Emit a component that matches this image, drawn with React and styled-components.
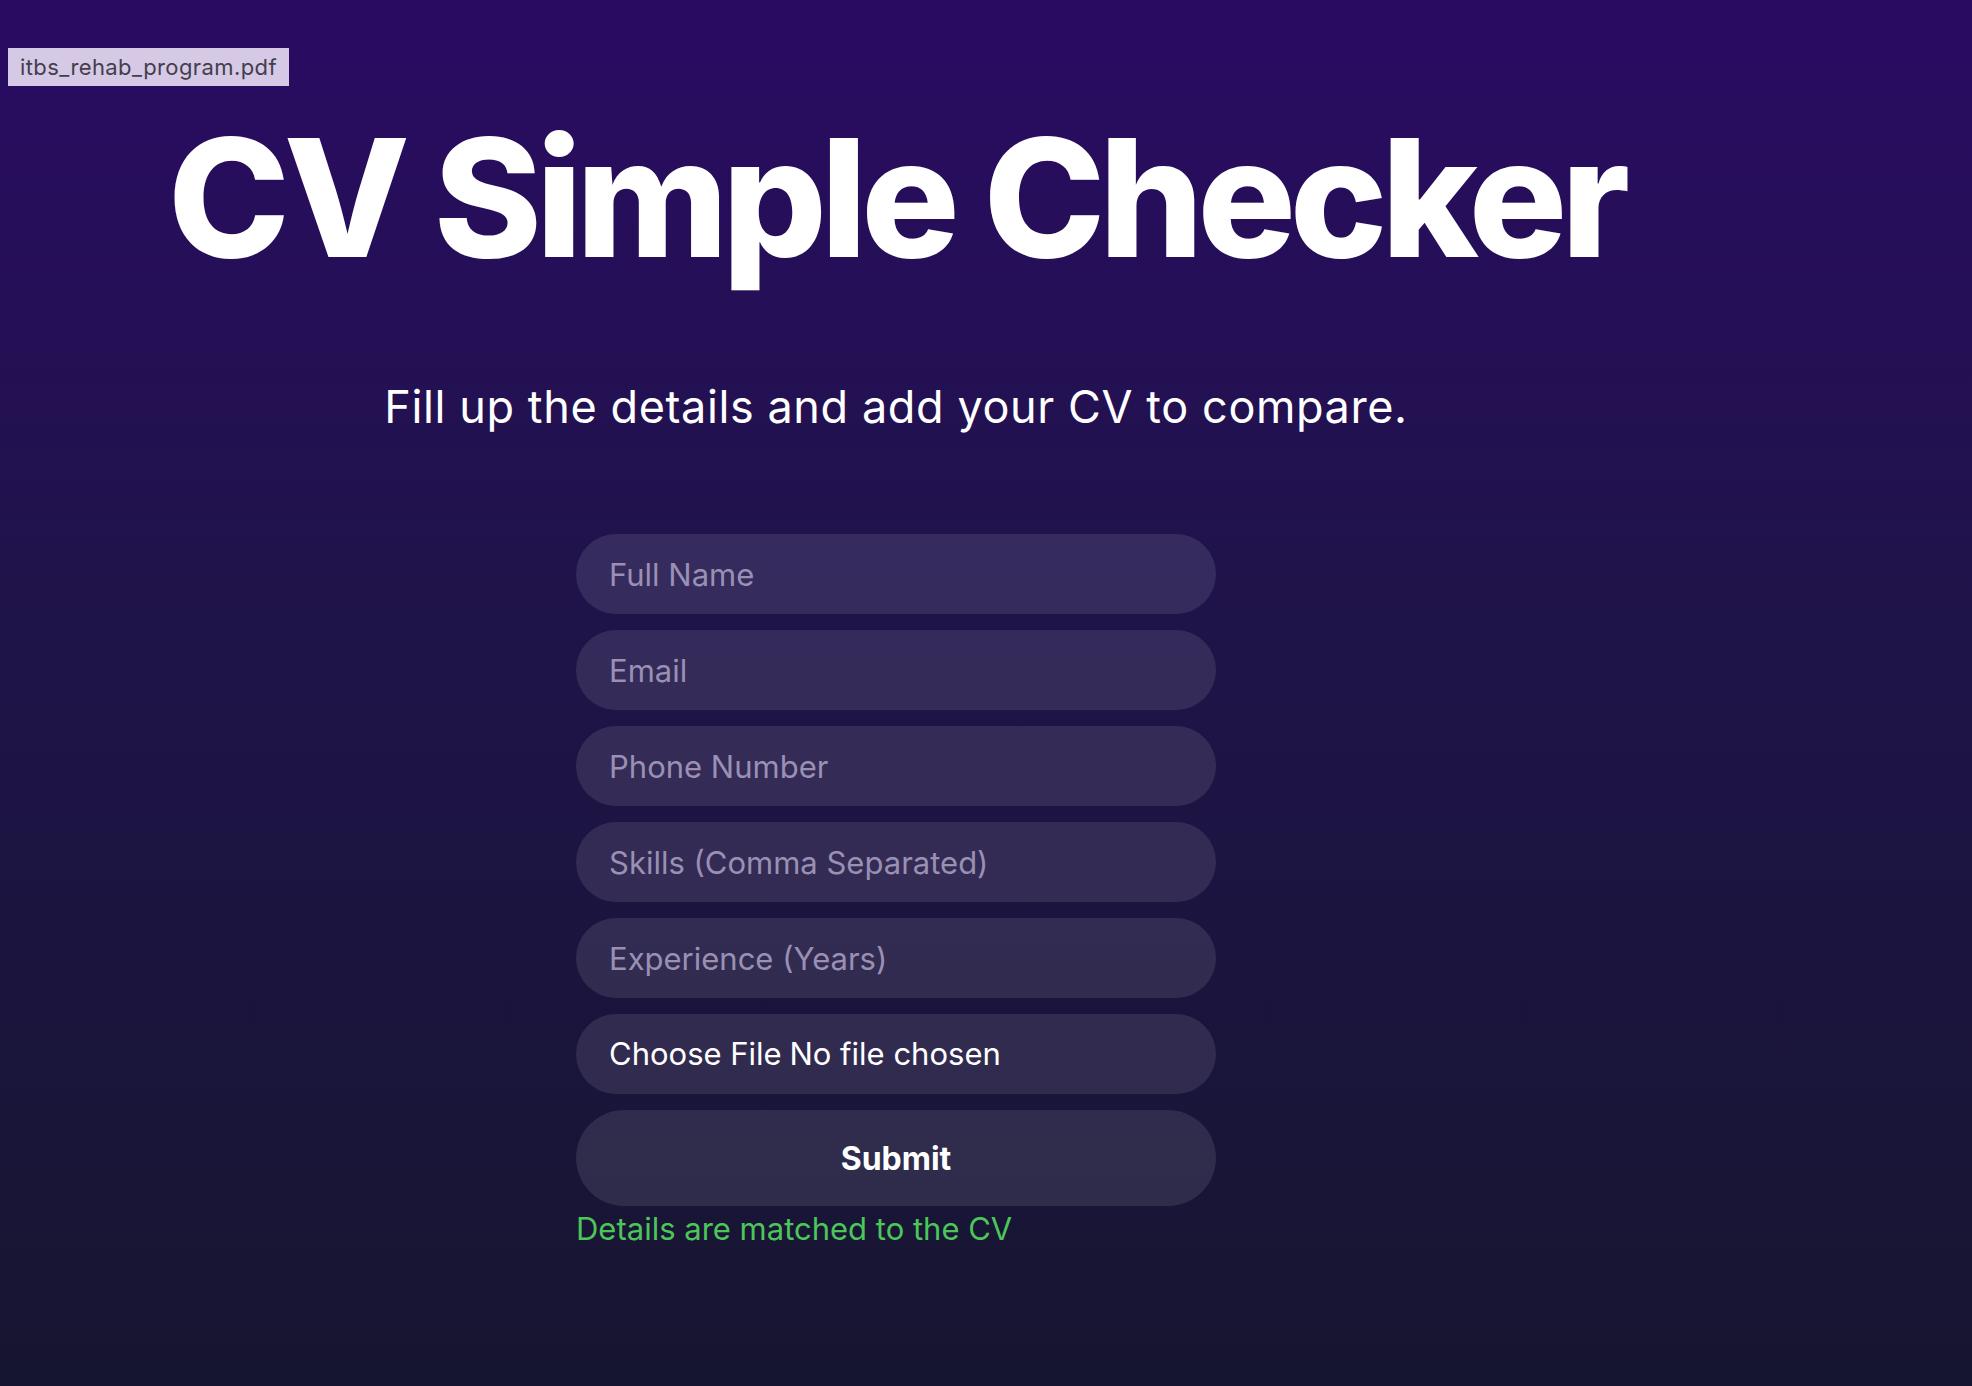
import React from 'react'
import styled, { createGlobalStyle } from 'styled-components'

const GlobalStyle = createGlobalStyle`
  * { box-sizing: border-box; }
  html, body { margin: 0; padding: 0; }
  body {
    font-family: Inter, "Noto Sans", "Liberation Sans", sans-serif;
    background: #171530;
  }
`

const Page = styled.div`
  min-height: 1386px;
  display: flex;
  flex-direction: column;
  background: linear-gradient(180deg, #2a0b63 0%, #1f1449 45%, #161530 100%);
  padding-top: 48px;
`

const FileTag = styled.div`
  align-self: flex-start;
  margin-left: 8px;
  height: 38px;
  padding: 0 12px;
  display: flex;
  align-items: center;
  background: #d5c9e6;
  color: #433e4d;
  font-size: 22px;
  letter-spacing: 0.4px;
`

const Main = styled.main`
  width: 1792px;
  display: flex;
  flex-direction: column;
  align-items: center;
`

const Title = styled.h1`
  margin: 30px 0 0;
  font-size: 164px;
  line-height: 1;
  font-weight: 800;
  letter-spacing: -0.037em;
  color: #ffffff;
  white-space: nowrap;
`

const Subtitle = styled.p`
  margin: 100px 0 0;
  font-size: 45px;
  line-height: 1.2;
  letter-spacing: 0.6px;
  color: #ffffff;
  white-space: nowrap;
`

const Form = styled.form`
  margin-top: 100px;
  width: 640px;
  display: flex;
  flex-direction: column;
  gap: 16px;
`

const Field = styled.input`
  height: 80px;
  width: 100%;
  padding: 0 33px;
  border: none;
  border-radius: 40px;
  outline: none;
  background: rgba(255, 255, 255, 0.1);
  color: #ffffff;
  font-family: inherit;
  font-size: 31px;

  &::placeholder {
    color: #9a90b4;
  }

  &[type='file'] {
    line-height: 80px;
  }

  &::file-selector-button {
    background: none;
    border: none;
    padding: 0;
    margin-right: 0.25em;
    color: #ffffff;
    font-family: inherit;
    font-size: 31px;
  }
`

const SubmitButton = styled.button`
  height: 96px;
  width: 100%;
  border: none;
  border-radius: 48px;
  background: rgba(255, 255, 255, 0.1);
  color: #ffffff;
  font-family: inherit;
  font-size: 32px;
  font-weight: 700;
  cursor: pointer;
`

const Status = styled.p`
  margin: -12px 0 0;
  font-size: 31px;
  line-height: 1.2;
  color: ${props => (props.ok ? '#4cc659' : '#e45a5a')};
`

const fields = [
  { type: 'text', placeholder: 'Full Name' },
  { type: 'email', placeholder: 'Email' },
  { type: 'tel', placeholder: 'Phone Number' },
  { type: 'text', placeholder: 'Skills (Comma Separated)' },
  { type: 'number', placeholder: 'Experience (Years)' },
]

export default function App() {
  return (
    <Page>
      <GlobalStyle />
      <FileTag>itbs_rehab_program.pdf</FileTag>
      <Main>
        <Title>CV Simple Checker</Title>
        <Subtitle>Fill up the details and add your CV to compare.</Subtitle>
        <Form onSubmit={e => e.preventDefault()}>
          {fields.map(f => (
            <Field key={f.placeholder} type={f.type} placeholder={f.placeholder} />
          ))}
          <Field type="file" accept=".pdf" />
          <SubmitButton type="submit">Submit</SubmitButton>
          <Status ok>Details are matched to the CV</Status>
        </Form>
      </Main>
    </Page>
  )
}
